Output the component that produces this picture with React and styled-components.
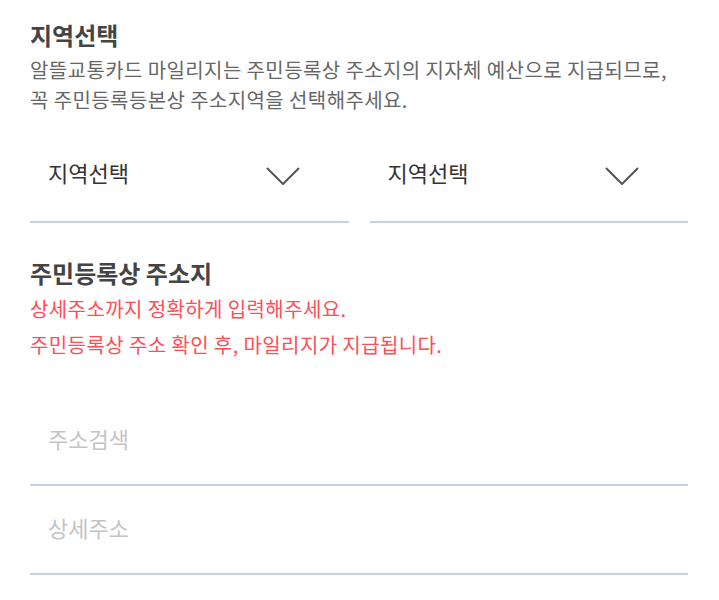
import React from "react";
import styled, { createGlobalStyle } from "styled-components";

const Global = createGlobalStyle`
  html, body { margin: 0; padding: 0; background: #fff; }
  body { font-family: "Noto Sans CJK KR", "Noto Sans", sans-serif; }
  * { box-sizing: border-box; }
`;

const Page = styled.div`
  padding: 18px 31px 0 30px;
  display: flex;
  flex-direction: column;
`;

const Section = styled.section`
  display: flex;
  flex-direction: column;
  margin-top: ${(p) => p.$top || 0}px;
`;

const Title = styled.h2`
  margin: 0;
  font-size: 24px;
  line-height: 34px;
  font-weight: 700;
  color: #444;
`;

const Desc = styled.p`
  margin: ${(p) => (p.$alert ? "1px" : "3px")} 0 0;
  font-size: 20px;
  line-height: ${(p) => (p.$alert ? "36px" : "30px")};
  color: ${(p) => (p.$alert ? "#ff4d55" : "#666")};
  letter-spacing: 0.4px;
`;

const SelectRow = styled.div`
  display: grid;
  grid-template-columns: 1fr 1fr;
  column-gap: 21px;
  margin-top: 20px;
`;

const Select = styled.div`
  height: 88px;
  display: flex;
  align-items: center;
  justify-content: space-between;
  padding: 0 49px 12px 18px;
  border-bottom: 2px solid #c6d1e2;
  font-size: 22px;
  color: #333;
  cursor: pointer;
`;

const ChevronWrap = styled.span`
  display: flex;
  margin-top: 8px;
`;

const Chevron = () => (
  <ChevronWrap>
    <svg width="34" height="18" viewBox="0 0 34 18" fill="none">
      <path d="M1 1 L17 17 L33 1" stroke="#555" strokeWidth="2" />
    </svg>
  </ChevronWrap>
);

const Field = styled.input`
  display: block;
  width: 100%;
  height: 89px;
  border: none;
  border-bottom: 2px solid #c6d1e2;
  padding: 0 0 5px 18px;
  font-family: inherit;
  font-size: 22px;
  color: #333;
  outline: none;
  background: transparent;
  &::placeholder { color: #c4c4c4; }
`;

const Fields = styled.div`
  display: flex;
  flex-direction: column;
  margin-top: 34px;
`;

export default function App() {
  return (
    <>
      <Global />
      <Page>
        <Section>
          <Title>지역선택</Title>
          <Desc>
            알뜰교통카드 마일리지는 주민등록상 주소지의 지자체 예산으로 지급되므로,
            <br />꼭 주민등록등본상 주소지역을 선택해주세요.
          </Desc>
          <SelectRow>
            <Select>
              <span>지역선택</span>
              <Chevron />
            </Select>
            <Select>
              <span>지역선택</span>
              <Chevron />
            </Select>
          </SelectRow>
        </Section>
        <Section $top={33}>
          <Title>주민등록상 주소지</Title>
          <Desc $alert>
            상세주소까지 정확하게 입력해주세요.
            <br />주민등록상 주소 확인 후, 마일리지가 지급됩니다.
          </Desc>
          <Fields>
            <Field placeholder="주소검색" />
            <Field placeholder="상세주소" />
          </Fields>
        </Section>
      </Page>
    </>
  );
}
